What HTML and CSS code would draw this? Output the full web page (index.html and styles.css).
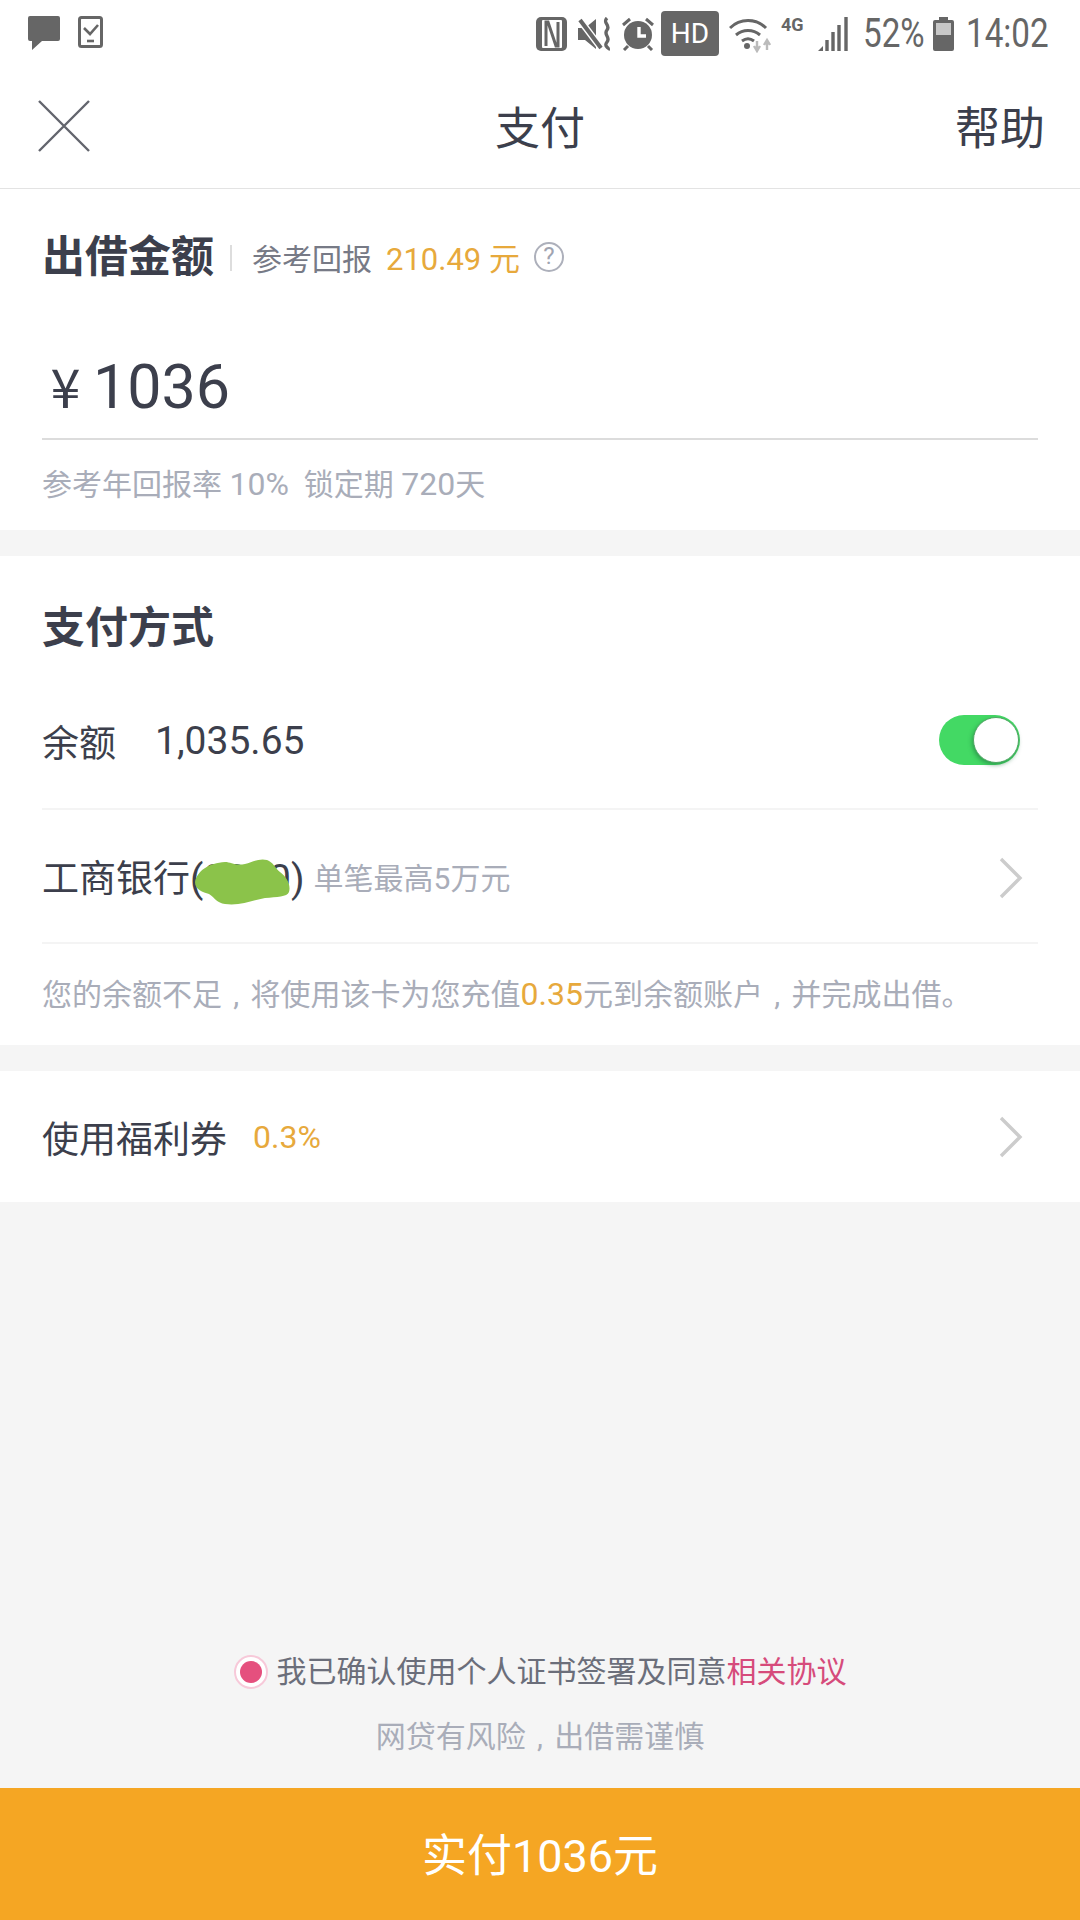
FILE: index.html
```html
<!DOCTYPE html>
<html lang="zh-CN">
    <head>
        <meta charset="utf-8">
        <title>支付</title>
        <link rel="stylesheet" href="styles.css">
    </head>
    <body>
        <div class="page">
            <div class="statusbar">
                <div class="status-left">
                    <svg width="32" height="35" viewBox="0 0 32 35"><path d="M2 0h28a2 2 0 0 1 2 2v21a2 2 0 0 1-2 2H14L4 34v-9H2a2 2 0 0 1-2-2V2a2 2 0 0 1 2-2z" fill="#666"/></svg>
                    <svg width="25" height="32" viewBox="0 0 25 32"><rect x="1.5" y="1.5" width="22" height="29" rx="2" fill="none" stroke="#666" stroke-width="3"/><path d="M6 12l6 6 8-9" fill="none" stroke="#666" stroke-width="2.6"/><path d="M9 25h7" stroke="#666" stroke-width="2.6"/></svg>
                </div>
                <div class="status-right">
                    <svg class="ic-nfc" width="31" height="34" viewBox="0 0 31 34"><rect x="0" y="0" width="31" height="34" rx="5" fill="#666"/><rect x="6" y="3" width="20" height="28" rx="1" fill="#fff"/><path d="M10 29V5h2l8 24h2V5" fill="none" stroke="#666" stroke-width="3"/></svg>
                    <svg class="ic-mute" width="34" height="34" viewBox="0 0 34 34"><path d="M0 11h7l11-9v30L7 23H0z" fill="#666"/><path d="M2 3l21 28" stroke="#fff" stroke-width="7"/><path d="M2 3l21 28" stroke="#666" stroke-width="4"/><path d="M29 1c-5 5 4 7 0 12s4 7 0 12 3 5 1 8" fill="none" stroke="#666" stroke-width="3.4"/></svg>
                    <svg class="ic-alarm" width="32" height="34" viewBox="0 0 32 34"><circle cx="16" cy="18" r="14" fill="#666"/><path d="M17 10v9h7" fill="none" stroke="#fff" stroke-width="3.4"/><path d="M1 8l7-6M31 8l-7-6M6 29l-4 4M26 29l4 4" stroke="#666" stroke-width="3"/></svg>
                    <span class="hd-badge">HD</span>
                    <svg class="ic-wifi" width="42" height="36" viewBox="0 0 42 36"><path d="M1 11c10-10 26-10 36 0M7 18c7-6 17-6 24 0M13 24c4-3 8-3 12 0" fill="none" stroke="#666" stroke-width="3"/><circle cx="18" cy="29" r="3" fill="#666"/><path d="M28 24v9m-3-4l3 5 3-5" fill="none" stroke="#bbb" stroke-width="2.4"/><path d="M38 33v-9m-3 4l3-5 3 5" fill="none" stroke="#bbb" stroke-width="2.4"/></svg>
                    <span class="net-type">4G</span>
                    <svg class="ic-signal" width="32" height="34" viewBox="0 0 32 34"><path d="M0 34l5-5v5z" fill="#666"/><path d="M9 34V23M15 34V15M21 34V8M28 34V0" stroke="#666" stroke-width="3.4"/></svg>
                    <span class="status-text pct">52%</span>
                    <svg class="ic-battery" width="21" height="34" viewBox="0 0 21 34"><path d="M6 0h9v3h4a2 2 0 0 1 2 2v27a2 2 0 0 1-2 2H2a2 2 0 0 1-2-2V5a2 2 0 0 1 2-2h4z" fill="#666"/><rect x="3" y="6" width="15" height="12" fill="#c8c8c8"/></svg>
                    <span class="status-text clock">14:02</span>
                </div>
            </div>

            <div class="topbar">
                <svg class="close" width="52" height="52" viewBox="0 0 52 52"><path d="M1 1l50 50M51 1L1 51" stroke="#63656d" stroke-width="2.4"/></svg>
                <h1>支付</h1>
                <span class="help">帮助</span>
            </div>

            <section class="card amount-card">
                <div class="amount-head">
                    <h2>出借金额</h2>
                    <i class="sep"></i>
                    <span class="ref-label">参考回报</span>
                    <span class="gold ref-value">210.49 元</span>
                    <span class="qmark">?</span>
                </div>
                <div class="amount-value"><span class="yen">¥</span>1036</div>
                <p class="hint">参考年回报率 <span class="num">10%</span>&nbsp;&nbsp;锁定期 <span class="num">720</span>天</p>
            </section>

            <section class="card pay-card">
                <h2 class="pay-title">支付方式</h2>
                <div class="row row-balance">
                    <span class="balance-label">余额</span>
                    <span class="balance-value">1,035.65</span>
                    <span class="toggle"><i></i></span>
                </div>
                <div class="row row-bank">
                    <span class="bank-name">工商银行<span class="card-no">(0000)</span>
                        <svg class="blob" width="96" height="46" viewBox="0 0 96 46"><path d="M0 23C2 12 14 4 30 3c6 0 10 4 20 2 8-2 14-6 22-4 6 2 8 8 13 12 7 5 11 13 9 20-2 5-12 5-24 6-12 2-24 8-40 6-8-1-10-6-16-10C8 33 0 31 0 23z" fill="#8bc34a"/></svg>
                    </span>
                    <span class="bank-limit">单笔最高5万元</span>
                    <svg class="chevron" width="24" height="42" viewBox="0 0 24 42"><path d="M2 2l19 19L2 40" fill="none" stroke="#ccc" stroke-width="3.4"/></svg>
                </div>
                <p class="notice">您的余额不足<span class="comma">,</span>将使用该卡为您充值<span class="gold num">0.35</span>元到余额账户<span class="comma">,</span>并完成出借。</p>
            </section>

            <section class="card coupon-card">
                <span class="coupon-label">使用福利券</span>
                <span class="gold coupon-value">0.3%</span>
                <svg class="chevron" width="24" height="42" viewBox="0 0 24 42"><path d="M2 2l19 19L2 40" fill="none" stroke="#ccc" stroke-width="3.4"/></svg>
            </section>

            <div class="footer">
                <div class="agree">
                    <span class="radio"><i></i></span>
                    <span>我已确认使用个人证书签署及同意<span class="link">相关协议</span></span>
                </div>
                <p class="risk">网贷有风险<span class="comma">,</span>出借需谨慎</p>
            </div>

            <div class="paybtn">实付1036元</div>
        </div>
    </body>
</html>
```

FILE: styles.css
```css
* { box-sizing: border-box; }
body {
    margin: 0;
    background: #f5f5f5;
    color: #3c3f4c;
    font-family: Roboto, "Noto Sans CJK SC", sans-serif;
}
h1, h2, p { margin: 0; font-weight: normal; }
i { font-style: normal; }
.page {
    width: 1080px;
    height: 1920px;
    display: flex;
    flex-direction: column;
    overflow: hidden;
}
.gold { color: #e7a93c; }
.num { font-size: 32px; }
.comma {
    display: inline-block;
    width: .95em;
    text-align: center;
}

/* status bar */
.statusbar {
    height: 64px;
    background: #fff;
    display: flex;
    justify-content: space-between;
    padding: 0 31px 0 28px;
}
.status-left {
    display: flex;
    gap: 18px;
    padding-top: 16px;
    align-items: flex-start;
}
.status-right {
    display: flex;
    align-items: flex-start;
    padding-top: 17px;
    color: #666;
}
.ic-mute { margin-left: 11px; }
.ic-alarm { margin-left: 10px; }
.hd-badge {
    width: 58px;
    height: 45px;
    margin: -6px 0 0 7px;
    background: #666;
    border-radius: 4px;
    color: #fff;
    font-size: 28px;
    line-height: 45px;
    text-align: center;
}
.ic-wifi { margin-left: 10px; }
.net-type {
    margin-left: 10px;
    font-size: 18px;
    font-weight: 700;
    line-height: 16px;
    width: 26px;
}
.ic-signal { margin-left: 11px; }
.status-text {
    font-size: 40px;
    line-height: 34px;
    transform-origin: left center;
    transform: scaleX(.83);
}
.pct { width: 60px; margin-left: 13px; }
.ic-battery { margin-left: 10px; }
.clock { width: 83px; margin-left: 12px; }

/* top bar */
.topbar {
    height: 125px;
    background: #fff;
    border-bottom: 1px solid #e3e3e3;
    display: flex;
    align-items: center;
    justify-content: space-between;
    padding: 0 35px 2px 38px;
    position: relative;
}
.close { margin-top: 2px; }
.topbar h1 {
    position: absolute;
    left: 0;
    right: 0;
    text-align: center;
    font-size: 45px;
}
.help { font-size: 45px; }

.card {
    background: #fff;
    padding: 0 42px;
}
h2 {
    font-size: 43px;
    font-weight: 700;
}

/* amount */
.amount-card {
    height: 341px;
    margin-bottom: 26px;
    padding-top: 34px;
}
.amount-head {
    height: 60px;
    display: flex;
    align-items: center;
}
.sep {
    width: 2px;
    height: 26px;
    margin: 10px 20px 0 16px;
    background: #ddd;
}
.ref-label,
.ref-value,
.qmark { margin-top: 7px; }
.ref-label {
    font-size: 30px;
    color: #777a86;
}
.ref-value {
    font-size: 31px;
    margin-left: 14px;
}
.qmark {
    width: 30px;
    height: 30px;
    margin-left: 14px;
    border: 2.5px solid #adb0bb;
    border-radius: 50%;
    color: #a0a4b1;
    font-size: 24px;
    line-height: 25px;
    text-align: center;
}
.amount-value {
    height: 95px;
    margin-top: 62px;
    border-bottom: 2px solid #dcdcdc;
    font-size: 61px;
    line-height: 80px;
    display: flex;
    align-items: baseline;
}
.yen {
    font-family: "Noto Sans CJK SC", sans-serif;
    font-size: 54px;
    margin: 0 7px 0 3px;
    width: 41px;
    text-align: center;
}
.hint {
    margin-top: 22px;
    font-size: 30px;
    line-height: 44px;
    color: #a9adb9;
}

/* pay method */
.pay-card {
    height: 489px;
    margin-bottom: 26px;
}
.pay-title {
    padding: 42px 0 16px;
    line-height: 60px;
}
.row {
    display: flex;
    align-items: center;
    border-bottom: 2px solid #f4f4f4;
}
.row-balance {
    height: 136px;
    font-size: 37px;
}
.balance-value {
    margin-left: 39px;
    font-size: 39px;
}
.toggle {
    width: 81px;
    height: 50px;
    margin: -2px 18px 0 auto;
    background: #43d964;
    border-radius: 25px;
    padding: 2px 1px 2px 34px;
}
.toggle i {
    display: block;
    width: 46px;
    height: 46px;
    background: #fff;
    border-radius: 50%;
    border: 1px solid #4fa663;
    box-shadow: -1px 2px 4px rgba(30, 110, 60, .55);
}
.row-bank {
    height: 134px;
}
.bank-name {
    position: relative;
    font-size: 37px;
}
.card-no { font-size: 39px; }
.blob {
    position: absolute;
    left: 153px;
    top: 10px;
}
.bank-limit {
    margin-left: 9px;
    font-size: 30px;
    color: #a9adb9;
}
.chevron {
    margin-left: auto;
    margin-right: 15px;
}
.row-bank .chevron { margin-top: 3px; }
.notice {
    padding-top: 28px;
    font-size: 30px;
    line-height: 44px;
    color: #a9adb9;
    white-space: nowrap;
}

/* coupon */
.coupon-card {
    height: 131px;
    display: flex;
    align-items: center;
}
.coupon-label { font-size: 37px; }
.coupon-value {
    margin-left: 26px;
    font-size: 32px;
}

/* footer */
.footer {
    flex: 1;
    display: flex;
    flex-direction: column;
    justify-content: flex-end;
    align-items: center;
    padding-bottom: 29px;
}
.agree {
    display: flex;
    align-items: center;
    gap: 9px;
    font-size: 30px;
    line-height: 44px;
    color: #6b6e7a;
}
.radio {
    width: 34px;
    height: 34px;
    border: 2px solid #f7c9d9;
    border-radius: 50%;
    background: #fff;
    display: flex;
    align-items: center;
    justify-content: center;
}
.radio i {
    width: 22px;
    height: 22px;
    background: #e5507e;
    border-radius: 50%;
}
.link { color: #d64b7b; }
.risk {
    margin-top: 21px;
    font-size: 30px;
    line-height: 44px;
    color: #a9adb9;
}
.paybtn {
    height: 132px;
    background: #f5a623;
    color: #fff;
    font-size: 45px;
    line-height: 138px;
    text-align: center;
}
```
